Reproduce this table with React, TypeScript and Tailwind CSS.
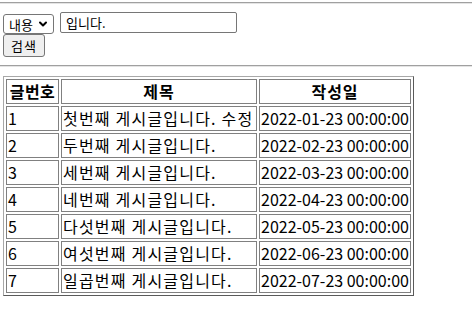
import { ChevronDown } from "lucide-react";

interface Post {
  id: number;
  title: string;
  createdAt: string;
}

const POSTS: Post[] = [
  { id: 1, title: "첫번째 게시글입니다. 수정", createdAt: "2022-01-23 00:00:00" },
  { id: 2, title: "두번째 게시글입니다.", createdAt: "2022-02-23 00:00:00" },
  { id: 3, title: "세번째 게시글입니다.", createdAt: "2022-03-23 00:00:00" },
  { id: 4, title: "네번째 게시글입니다.", createdAt: "2022-04-23 00:00:00" },
  { id: 5, title: "다섯번째 게시글입니다.", createdAt: "2022-05-23 00:00:00" },
  { id: 6, title: "여섯번째 게시글입니다.", createdAt: "2022-06-23 00:00:00" },
  { id: 7, title: "일곱번째 게시글입니다.", createdAt: "2022-07-23 00:00:00" },
];

const FONT = "font-['Noto_Sans_CJK_KR','Noto_Sans',sans-serif]";
const cell = "h-[25px] border border-[#808080] p-px leading-[21px] whitespace-nowrap overflow-hidden";

function Rule() {
  return <div className="h-[2px] w-full border-t border-b border-t-[#a0a0a0] border-b-[#e4e4e4]" />;
}

export default function App() {
  return (
    <div className={`${FONT} min-h-[327px] bg-white pt-[2px] text-black`}>
      <Rule />

      {/* Search form */}
      <form className="px-[3px] pt-[8px]" onSubmit={(e) => e.preventDefault()}>
        <div className="flex items-start gap-[6px]">
          <div className="mt-[2px] flex h-[20px] w-[51px] items-center justify-between rounded-[3px] border border-[#767676] bg-white pl-[5px] pr-[4px] text-[13px] leading-none">
            <span>내용</span>
            <ChevronDown className="h-[12px] w-[12px]" strokeWidth={4} />
          </div>
          <input
            className="h-[21px] w-[177px] rounded-[2px] border border-[#767676] px-[5px] text-[13px] outline-none"
            defaultValue="입니다."
          />
        </div>
        <button
          type="submit"
          className="mt-[0px] flex h-[23px] w-[42px] items-center justify-center rounded-[3px] border border-[#767676] bg-[#efefef] text-[13px] leading-none tracking-[1px]"
        >
          검색
        </button>
      </form>

      <div className="pt-[8px]">
        <Rule />
      </div>

      {/* Post list */}
      <div className="px-[3px] pt-[9px]">
        <table className="table-fixed border-separate border-spacing-[2px] border border-t-[#a8a8a8] border-l-[#a8a8a8] border-r-[#5a5a5a] border-b-[#5a5a5a] text-[16px]">
          <colgroup>
            <col className="w-[53px]" />
            <col className="w-[196px]" />
            <col className="w-[152px]" />
          </colgroup>
          <thead>
            <tr>
              <th className={`${cell} text-center font-bold tracking-[0.5px]`}>글번호</th>
              <th className={`${cell} text-center font-bold tracking-[1px]`}>제목</th>
              <th className={`${cell} text-center font-bold tracking-[1px]`}>작성일</th>
            </tr>
          </thead>
          <tbody>
            {POSTS.map((post) => (
              <tr key={post.id}>
                <td className={`${cell} text-left`}>{post.id}</td>
                <td className={`${cell} text-left tracking-[1.2px]`}>{post.title}</td>
                <td className={`${cell} text-left`}>{post.createdAt}</td>
              </tr>
            ))}
          </tbody>
        </table>
      </div>
    </div>
  );
}
